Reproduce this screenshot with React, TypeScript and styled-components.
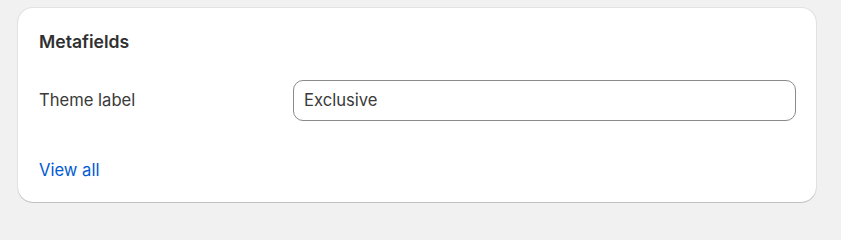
import { createGlobalStyle, styled } from "styled-components";

const GlobalStyle = createGlobalStyle`
  html, body {
    margin: 0;
    padding: 0;
    background: #f1f1f1;
    font-family: Inter, "Noto Sans", sans-serif;
    color: #303030;
  }
`;

const Page = styled.div`
  padding: 8px 25px 6px 18px;
`;

const Card = styled.section`
  background: #ffffff;
  border-radius: 15px;
  padding: 21px 20px 19px 21px;
  box-shadow: 0 1px 0 0 rgba(26, 26, 26, 0.16), 0 0 0 1px rgba(26, 26, 26, 0.07);
  display: flex;
  flex-direction: column;
`;

const Heading = styled.h2`
  margin: 0;
  font-size: 17.6px;
  line-height: 25px;
  font-weight: 600;
  color: #303030;
`;

const FieldRow = styled.div`
  display: grid;
  grid-template-columns: 254px 1fr;
  align-items: center;
  margin-top: 26px;
`;

const Label = styled.label`
  font-size: 16.6px;
  line-height: 25px;
  color: #3a3a3a;
`;

const Input = styled.input`
  box-sizing: border-box;
  width: 100%;
  height: 41px;
  border: 1px solid #8a8a8a;
  border-radius: 10px;
  padding: 0 10px 1px;
  font-family: inherit;
  font-size: 16.6px;
  color: #3a3a3a;
  background: #ffffff;
  outline: none;
`;

const Link = styled.a`
  margin-top: 37px;
  font-size: 16.6px;
  line-height: 25px;
  color: #005bd3;
  text-decoration: none;
  align-self: flex-start;
  cursor: pointer;
`;

export default function App() {
  return (
    <>
      <GlobalStyle />
      <Page>
        <Card>
          <Heading>Metafields</Heading>
          <FieldRow>
            <Label htmlFor="theme-label">Theme label</Label>
            <Input id="theme-label" defaultValue="Exclusive" readOnly />
          </FieldRow>
          <Link>View all</Link>
        </Card>
      </Page>
    </>
  );
}
